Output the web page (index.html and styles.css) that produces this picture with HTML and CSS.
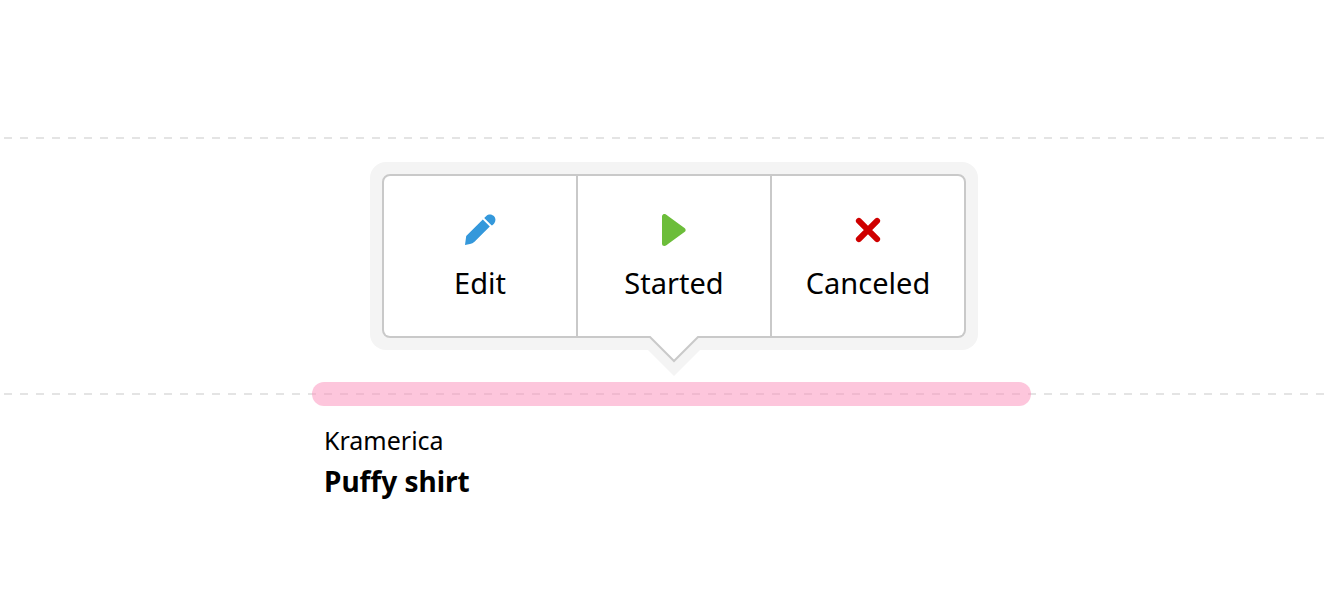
FILE: index.html
```
<!DOCTYPE html>
<html lang="en">
<head>
<meta charset="utf-8">
<title>Timeline</title>
<link rel="stylesheet" href="styles.css">
</head>
<body>
<main class="timeline">
  <div class="lane"></div>
  <div class="lane">
    <article class="task">
      <div class="bar"></div>
      <div class="task-info">
        <p class="client">Kramerica</p>
        <h1 class="title">Puffy shirt</h1>
      </div>
      <div class="popover" role="group" aria-label="Task actions">
        <div class="actions">
          <button class="action" type="button">
            <svg class="icon" viewBox="0 0 32 32" aria-hidden="true"><path fill="#3498db" d="M1 31 2.200 22 18.800 5.400 25.800 12.400 10.500 27.700Q8.500 29.700 6 30.100ZM20.200 4 22.300 1.900C24.500 0 27.800 0 29.900 2.100C32 4.200 32 7.500 30 9.700L28.600 11.100Q27.900 11.700 27.200 11Z"/></svg>
            <span>Edit</span>
          </button>
          <button class="action" type="button">
            <svg class="icon" viewBox="0 0 32 32" aria-hidden="true"><path fill="#6cbd3a" stroke="#6cbd3a" stroke-width="5" stroke-linejoin="round" d="M6.500 2.500V29.500L25 16Z"/></svg>
            <span>Started</span>
          </button>
          <button class="action" type="button">
            <svg class="icon" viewBox="0 0 32 32" aria-hidden="true"><path fill="none" stroke="#cf0000" stroke-width="6" stroke-linecap="round" d="M6.900 6.900 25.100 25.100M25.100 6.900 6.900 25.100"/></svg>
            <span>Canceled</span>
          </button>
        </div>
        <svg class="arrow" viewBox="0 0 56 40" aria-hidden="true"><path fill="#f4f4f4" d="M2 14H54L28 40Z"/><path fill="#fff" d="M3 0H53V1L28 26 3 1Z"/><path fill="none" stroke="#c9c9c9" stroke-width="2" d="M2 1H4L28 25 52 1H54"/></svg>
      </div>
    </article>
  </div>
</main>
</body>
</html>
```
FILE: styles.css
```
* {
  box-sizing: border-box;
}

body {
  margin: 0;
  background: #fff;
  color: #000;
  font-family: "Noto Sans", sans-serif;
}

.timeline {
  padding: 137px 4px 0;
}

.lane {
  display: flow-root;
  min-height: 256px;
  background: repeating-linear-gradient(to right, #e4e4e4 0 8px, transparent 8px 16px) top / 100% 2px no-repeat;
}

.lane:last-child {
  min-height: 200px;
  padding-left: 308px;
}

.task {
  position: relative;
  width: 70.8%;
  margin-top: -11px;
}

.bar {
  height: 24px;
  border-radius: 12px;
  background: rgba(251, 141, 185, 0.5);
}

.task-info {
  padding: 16px 12px 0;
}

.client,
.title {
  margin: 0;
}

.client {
  font-size: 25px;
  line-height: 36px;
}

.title {
  font-size: 28px;
  font-weight: 700;
  line-height: 46px;
}

.popover {
  position: absolute;
  bottom: 100%;
  left: 58px;
  width: 608px;
  margin-bottom: 32px;
  padding: 12px;
  border-radius: 16px;
  background: #f4f4f4;
}

.actions {
  display: grid;
  grid-template-columns: repeat(3, 1fr);
  gap: 2px;
  overflow: hidden;
  border: 2px solid #c9c9c9;
  border-radius: 8px;
  background: #c9c9c9;
}

.action {
  display: flex;
  flex-direction: column;
  align-items: center;
  gap: 14px;
  height: 160px;
  padding: 38px 0 0;
  border: 0;
  background: #fff;
  color: inherit;
  font: inherit;
  font-size: 29px;
  line-height: 46px;
  cursor: pointer;
}

.icon {
  width: 32px;
  height: 32px;
}

.arrow {
  position: absolute;
  left: 276px;
  top: 174px;
  width: 56px;
  height: 40px;
}
```
